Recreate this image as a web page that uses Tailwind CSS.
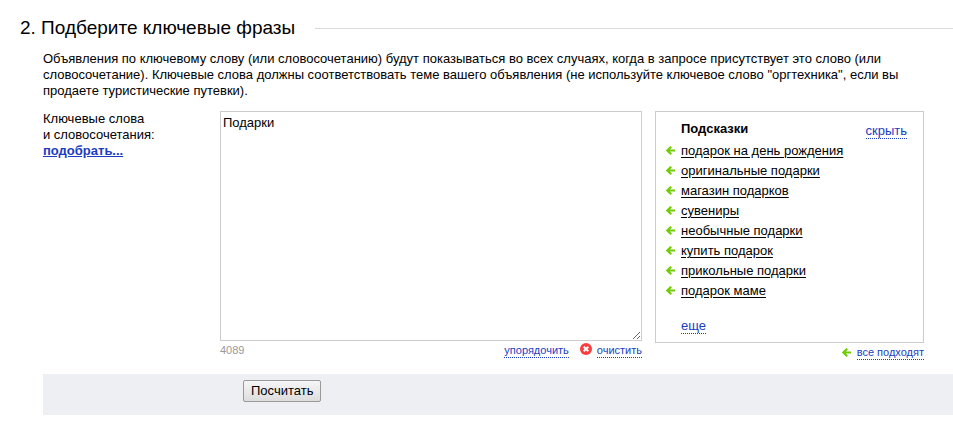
<!DOCTYPE html>
<html lang="ru">
<head>
  <meta charset="UTF-8" />
  <meta name="viewport" content="width=device-width, initial-scale=1.0" />
  <title>Подберите ключевые фразы</title>
  <script src="https://cdn.jsdelivr.net/npm/@tailwindcss/browser@4"></script>
</head>
<body class="bg-white text-black text-[13px] leading-4 font-['Liberation_Sans',Arial,sans-serif]">
  <!-- Arrow shared by the hints -->
  <svg class="hidden">
    <symbol id="arrow" viewBox="0 0 9 10">
      <path d="M1 4.5H9M5.2 0.7L1.4 4.5L5.2 8.3" fill="none" stroke="#72cc05" stroke-width="2.2" />
    </symbol>
  </svg>

  <main class="pt-4">
    <div class="flex items-center pl-5">
      <h1 class="text-[19px] leading-6">2. Подберите ключевые фразы</h1>
      <div class="ml-5 h-px flex-1 bg-[#d9d9d9]"></div>
    </div>

    <p class="mt-[11px] pl-[43px] pr-12">Объявления по ключевому слову (или словосочетанию) будут показываться во всех случаях, когда в запросе присутствует это слово (или словосочетание). Ключевые слова должны соответствовать теме вашего объявления (не используйте ключевое слово "оргтехника", если вы продаете туристические путевки).</p>

    <div class="mt-3 flex pl-[43px] pr-[29px]">
      <div class="w-[177px] shrink-0">
        <label for="phrases" class="block">Ключевые слова<br />и словосочетания:</label>
        <a href="#" class="font-bold text-[#1a3dc1] underline">подобрать...</a>
      </div>

      <!-- Phrases -->
      <div class="min-w-0 flex-1">
        <textarea id="phrases" class="block h-[230px] w-full resize border border-[#cccccc] px-0.5 py-[3px] leading-4 outline-none">Подарки</textarea>
        <div class="mt-0.5 flex text-[11px] leading-[14px]">
          <span class="flex-1 text-[#999999]">4089</span>
          <a href="#" class="border-b border-dotted border-[#1a3dc1] text-[#1a3dc1]">упорядочить</a>
          <a href="#" class="ml-[11px] flex items-start text-[#1a3dc1]">
            <svg class="mr-[5px] size-3" viewBox="0 0 12 12">
              <circle cx="6" cy="6" r="6" fill="#f93e3e" />
              <path d="M3.7 3.7L8.3 8.3M8.3 3.7L3.7 8.3" stroke="#fff" stroke-width="2" />
            </svg>
            <span class="border-b border-dotted border-[#1a3dc1]">очистить</span>
          </a>
        </div>
      </div>

      <!-- Hints -->
      <div class="ml-[13px] w-[269px] shrink-0">
        <section class="h-[232px] border border-[#cccccc] pl-[10px] pr-4 pt-[9px]">
          <div class="flex items-start justify-between pl-[15px]">
            <h2 class="font-bold">Подсказки</h2>
            <a href="#" class="mt-[3px] border-b border-dotted border-[#1a3dc1] leading-[14px] text-[#1a3dc1]">скрыть</a>
          </div>
          <ul class="mt-[2px] leading-5">
            <li><a href="#" class="flex items-center"><svg class="mr-[6px] h-[10px] w-[9px]"><use href="#arrow" /></svg><span class="underline underline-offset-2">подарок на день рождения</span></a></li>
            <li><a href="#" class="flex items-center"><svg class="mr-[6px] h-[10px] w-[9px]"><use href="#arrow" /></svg><span class="underline underline-offset-2">оригинальные подарки</span></a></li>
            <li><a href="#" class="flex items-center"><svg class="mr-[6px] h-[10px] w-[9px]"><use href="#arrow" /></svg><span class="underline underline-offset-2">магазин подарков</span></a></li>
            <li><a href="#" class="flex items-center"><svg class="mr-[6px] h-[10px] w-[9px]"><use href="#arrow" /></svg><span class="underline underline-offset-2">сувениры</span></a></li>
            <li><a href="#" class="flex items-center"><svg class="mr-[6px] h-[10px] w-[9px]"><use href="#arrow" /></svg><span class="underline underline-offset-2">необычные подарки</span></a></li>
            <li><a href="#" class="flex items-center"><svg class="mr-[6px] h-[10px] w-[9px]"><use href="#arrow" /></svg><span class="underline underline-offset-2">купить подарок</span></a></li>
            <li><a href="#" class="flex items-center"><svg class="mr-[6px] h-[10px] w-[9px]"><use href="#arrow" /></svg><span class="underline underline-offset-2">прикольные подарки</span></a></li>
            <li><a href="#" class="flex items-center"><svg class="mr-[6px] h-[10px] w-[9px]"><use href="#arrow" /></svg><span class="underline underline-offset-2">подарок маме</span></a></li>
          </ul>
          <a href="#" class="ml-[15px] mt-[18px] inline-block border-b border-dotted border-[#1a3dc1] leading-[14px] text-[#1a3dc1]">еще</a>
        </section>
        <div class="mt-0.5 flex justify-end text-[11px] leading-[14px]">
          <a href="#" class="flex items-center text-[#1a3dc1]">
            <svg class="mr-[6px] h-[10px] w-[9px]"><use href="#arrow" /></svg>
            <span class="border-b border-dotted border-[#1a3dc1]">все подходят</span>
          </a>
        </div>
      </div>
    </div>

    <div class="mt-[14px] ml-[43px] bg-[#eeeff2] pt-[6px] pb-[13px] pl-[200px]">
      <button type="button" class="block rounded-xs border border-[#999999] bg-linear-to-b from-[#f6f6f6] to-[#dddddd] px-[7px] py-0.5">Посчитать</button>
    </div>
  </main>
</body>
</html>
